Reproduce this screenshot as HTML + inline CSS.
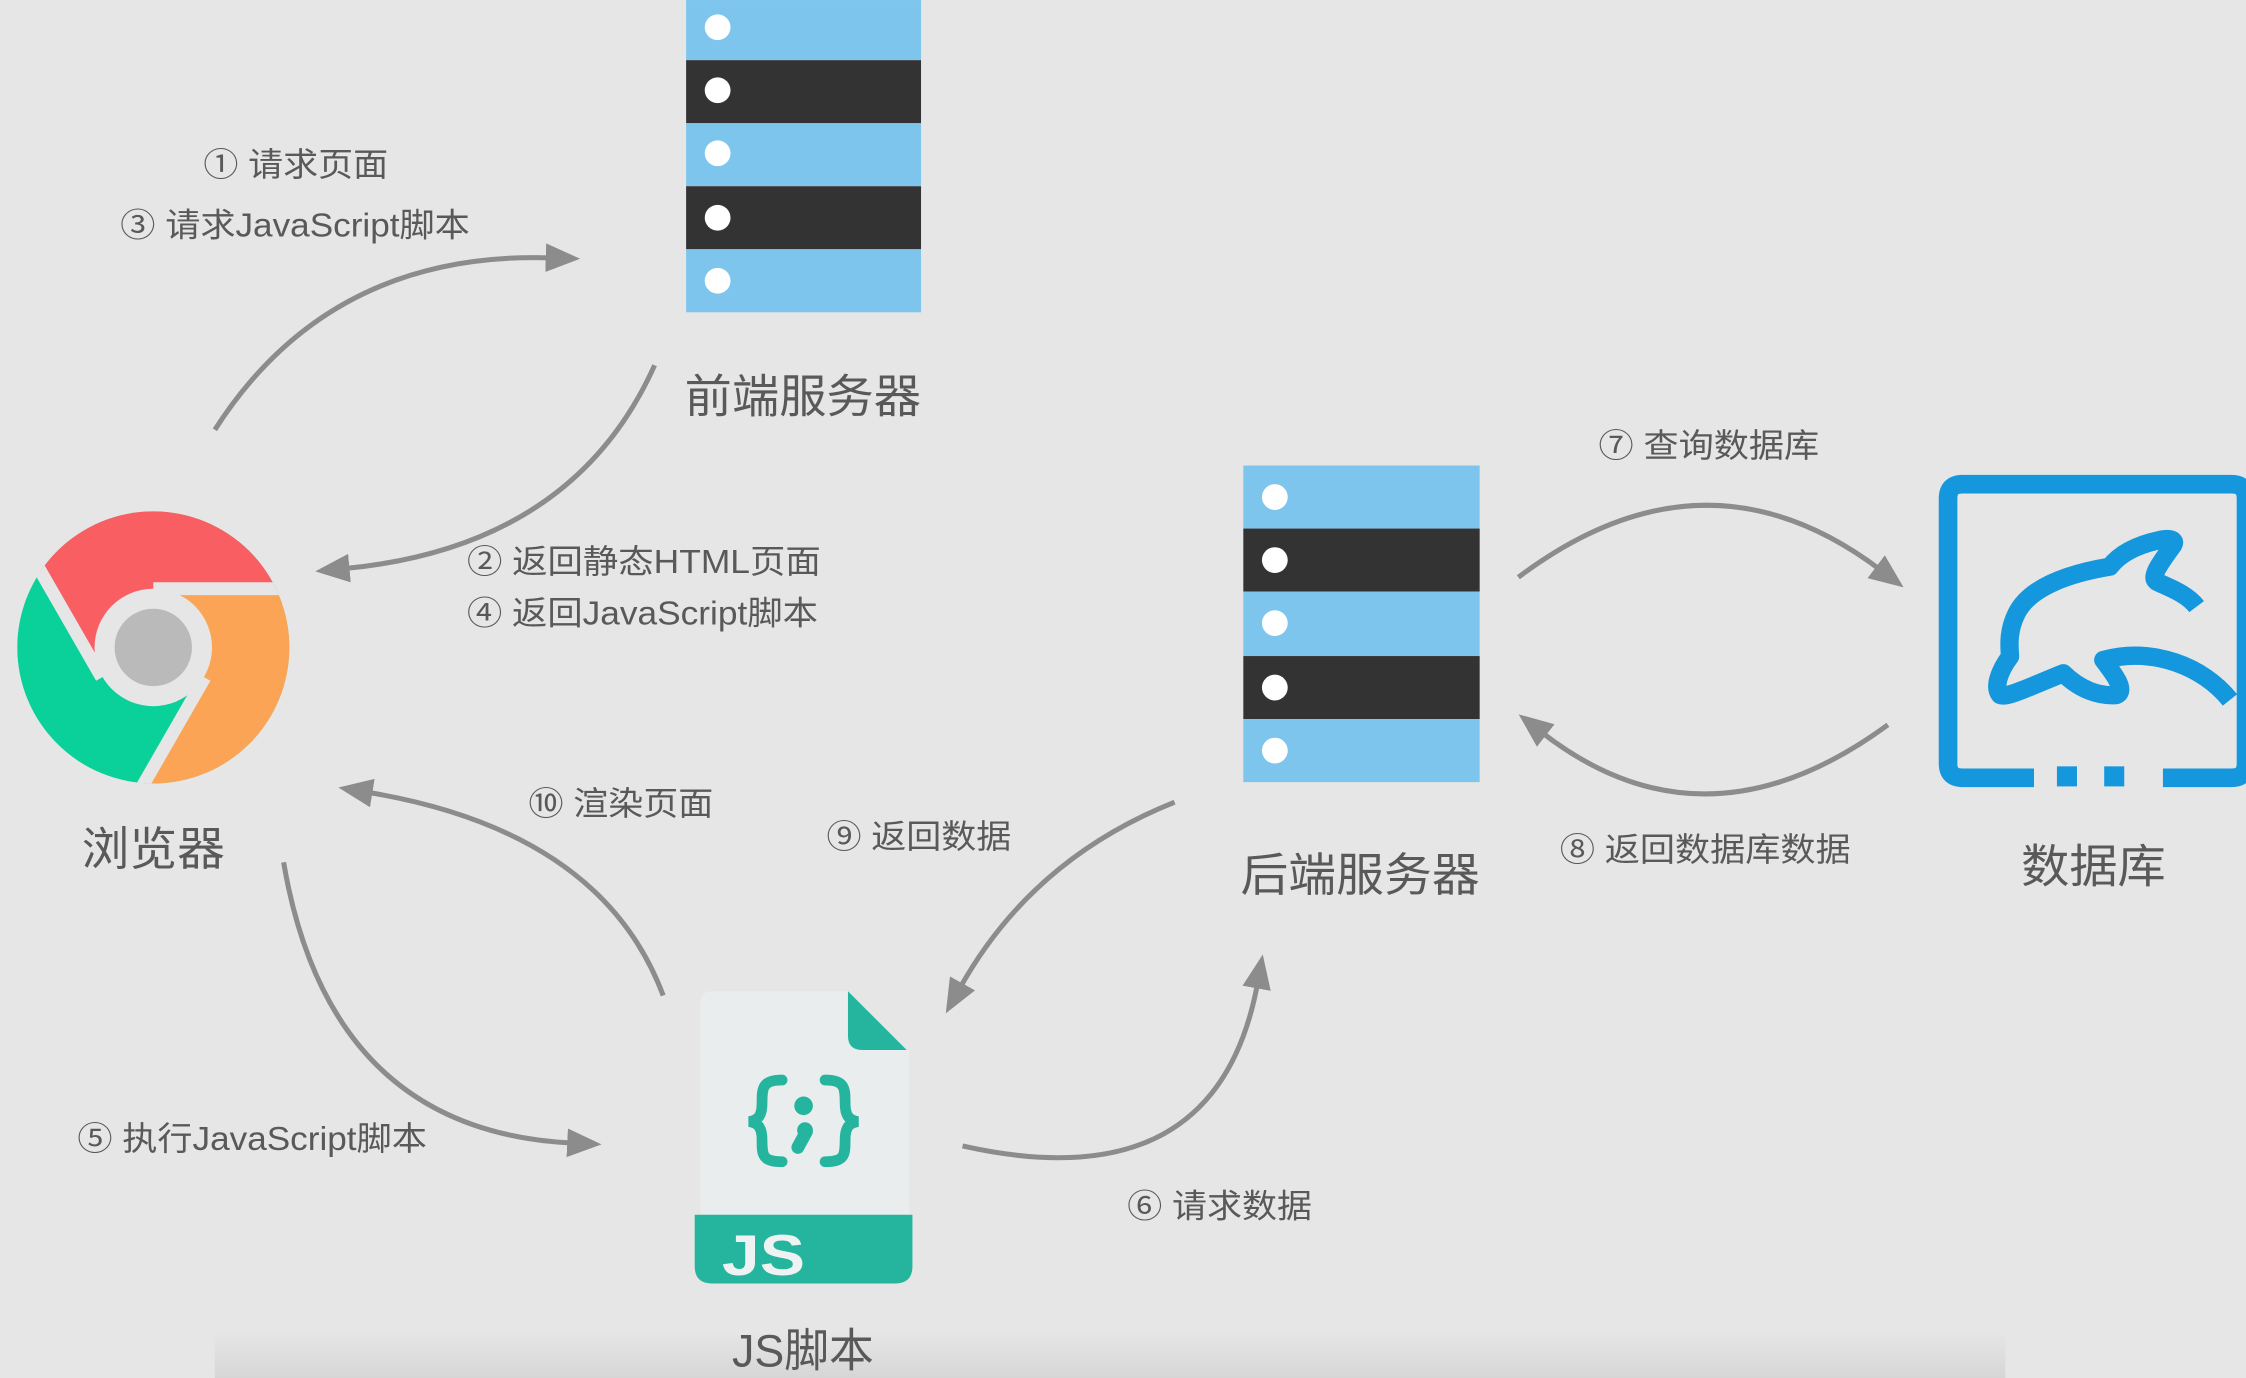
<!DOCTYPE html>
<html><head><meta charset="utf-8"><style>
html,body{margin:0;padding:0;background:#e6e6e6;}
svg{display:block;}
text{font-family:"Liberation Sans","Noto Sans CJK SC",sans-serif;fill:#595959;}
.s{font-size:23px;}
.b{font-size:32px;}
.a{fill:none;stroke:#8c8c8c;stroke-width:3.5;marker-end:url(#h);}
</style></head><body>
<svg width="2246" height="1378" viewBox="0 0 1568 962" xmlns="http://www.w3.org/2000/svg">
<defs>
<marker id="h" markerUnits="userSpaceOnUse" markerWidth="26" markerHeight="24" refX="4" refY="12" orient="auto">
<path d="M0,2 L24,12 L0,22 Z" fill="#8c8c8c"/>
</marker>
<clipPath id="cc"><circle cx="107" cy="452" r="95"/></clipPath>
<linearGradient id="bt" x1="0" y1="0" x2="0" y2="1"><stop offset="0" stop-color="#e6e6e6"/><stop offset="1" stop-color="#d6d6d6"/></linearGradient>
</defs>
<rect width="1568" height="962" fill="#e6e6e6"/>
<rect x="150" y="930" width="1250" height="32" fill="url(#bt)"/>

<g>
<rect x="479" y="0" width="164" height="42" fill="#7dc5ec"/>
<rect x="479" y="42" width="164" height="44" fill="#333"/>
<rect x="479" y="86" width="164" height="44" fill="#7dc5ec"/>
<rect x="479" y="130" width="164" height="44" fill="#333"/>
<rect x="479" y="174" width="164" height="44" fill="#7dc5ec"/>
<circle cx="501" cy="19" r="9" fill="#fff"/><circle cx="501" cy="63" r="9" fill="#fff"/><circle cx="501" cy="107" r="9" fill="#fff"/><circle cx="501" cy="152" r="9" fill="#fff"/><circle cx="501" cy="196" r="9" fill="#fff"/>
</g>
<g>
<rect x="868" y="325" width="165" height="44" fill="#7dc5ec"/>
<rect x="868" y="369" width="165" height="44" fill="#333"/>
<rect x="868" y="413" width="165" height="45" fill="#7dc5ec"/>
<rect x="868" y="458" width="165" height="44" fill="#333"/>
<rect x="868" y="502" width="165" height="44" fill="#7dc5ec"/>
<circle cx="890" cy="347" r="9" fill="#fff"/><circle cx="890" cy="391" r="9" fill="#fff"/><circle cx="890" cy="435" r="9" fill="#fff"/><circle cx="890" cy="480" r="9" fill="#fff"/><circle cx="890" cy="524" r="9" fill="#fff"/>
</g>

<g clip-path="url(#cc)">
<circle cx="107" cy="452" r="95" fill="#09d199"/>
<polygon points="71,473 -79,212 -79,150 300,150 300,411 107,411" fill="#f85e62"/>
<polygon points="107,411 300,411 300,750 -7,734 143,473" fill="#fca456"/>
<g stroke="#e6e6e6" stroke-width="9">
<line x1="107" y1="411" x2="300" y2="411"/>
<line x1="143" y1="473" x2="-7" y2="734"/>
<line x1="71" y1="473" x2="-79" y2="212"/>
</g>
</g>
<circle cx="107" cy="452" r="41" fill="#e6e6e6"/>
<circle cx="107" cy="452" r="27" fill="#bababa"/>

<g fill="none" stroke="#1597dd" stroke-width="13">
<path d="M1420,543 H1370 Q1360,543 1360,533 V348 Q1360,338 1370,338 H1558 Q1568,338 1568,348 V533 Q1568,543 1558,543 H1510"/>
</g>
<rect x="1436" y="535" width="14" height="14" fill="#1597dd"/>
<rect x="1469" y="535" width="14" height="14" fill="#1597dd"/>
<g transform="translate(1340.4,321.1) scale(0.2327)">
<path d="M830,440 C800,400 740,380 710,365 C690,350 720,310 760,255 C770,235 740,235 720,240 C650,255 600,280 570,320 C450,340 330,380 290,460 C260,520 270,570 270,590 C240,630 220,680 240,705 C260,715 330,680 430,640 C480,690 540,710 590,705 C620,690 580,640 550,600 C700,560 850,620 930,720" fill="none" stroke="#1597dd" stroke-width="55" stroke-linejoin="round"/>
</g>

<path d="M497,692 H592 V725 Q592,733 600,733 H635 V848 H489 V700 Q489,692 497,692 Z" fill="#e9eded"/>
<path d="M592,692 L633,733 H602 Q592,733 592,723 Z" fill="#25b59f"/>
<path d="M485,848 H637 V884 Q637,896 625,896 H497 Q485,896 485,884 Z" fill="#25b59f"/>
<g fill="none" stroke="#25b59f" stroke-width="7.5" stroke-linecap="round">
<path d="M546,754 C532,754 532,760 532,770 C532,778 530,782 523,783 C530,784 532,788 532,796 C532,806 532,811 546,811"/>
<path d="M576,754 C590,754 590,760 590,770 C590,778 592,782 599,783 C592,784 590,788 590,796 C590,806 590,811 576,811"/>
<path d="M563,790 L557,801" stroke-width="9"/>
</g>
<circle cx="561" cy="772" r="6.5" fill="#25b59f"/>
<circle cx="562" cy="789" r="5.5" fill="#25b59f"/>
<text x="504" y="890" textLength="58" lengthAdjust="spacingAndGlyphs" style="font-size:40px;font-weight:bold;fill:#eef2f2">JS</text>

<path class="a" d="M150,300 Q230,175 385,180"/>
<path class="a" d="M457,255 Q400,382 240,397"/>
<path class="a" d="M1060,403 Q1190,305 1313,398"/>
<path class="a" d="M1318,506 Q1190,600 1076,511"/>
<path class="a" d="M463,695 Q420,580 256,553"/>
<path class="a" d="M820,560 Q720,600 670,690"/>
<path class="a" d="M198,602 Q230,790 400,798"/>
<path class="a" d="M672,800 Q850,840 878,686"/>

<text class="b" x="478" y="288" textLength="165" lengthAdjust="spacingAndGlyphs">前端服务器</text>
<text class="b" x="57" y="604" textLength="100" lengthAdjust="spacingAndGlyphs">浏览器</text>
<text class="b" x="866" y="622" textLength="167" lengthAdjust="spacingAndGlyphs">后端服务器</text>
<text class="b" x="1411" y="616" textLength="101" lengthAdjust="spacingAndGlyphs">数据库</text>
<text class="b" x="511" y="954" textLength="99" lengthAdjust="spacingAndGlyphs">JS脚本</text>

<text class="s" x="142" y="123" textLength="129" lengthAdjust="spacingAndGlyphs">① 请求页面</text>
<text class="s" x="84" y="165" textLength="244" lengthAdjust="spacingAndGlyphs">③ 请求JavaScript脚本</text>
<text class="s" x="326" y="400" textLength="247" lengthAdjust="spacingAndGlyphs">② 返回静态HTML页面</text>
<text class="s" x="326" y="436" textLength="245" lengthAdjust="spacingAndGlyphs">④ 返回JavaScript脚本</text>
<text class="s" x="369" y="569" textLength="129" lengthAdjust="spacingAndGlyphs">⑩ 渲染页面</text>
<text class="s" x="577" y="592" textLength="129" lengthAdjust="spacingAndGlyphs">⑨ 返回数据</text>
<text class="s" x="1116" y="319" textLength="154" lengthAdjust="spacingAndGlyphs">⑦ 查询数据库</text>
<text class="s" x="1089" y="601" textLength="203" lengthAdjust="spacingAndGlyphs">⑧ 返回数据库数据</text>
<text class="s" x="54" y="803" textLength="244" lengthAdjust="spacingAndGlyphs">⑤ 执行JavaScript脚本</text>
<text class="s" x="787" y="850" textLength="129" lengthAdjust="spacingAndGlyphs">⑥ 请求数据</text>
</svg>
</body></html>
